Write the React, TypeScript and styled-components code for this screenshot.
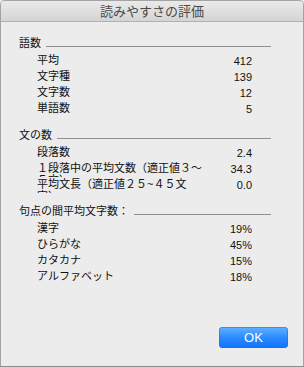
import React from "react";
import styled, { createGlobalStyle } from "styled-components";

const Global = createGlobalStyle`
  html, body { margin: 0; padding: 0; background: #ececec; }
  * { box-sizing: border-box; }
`;

const Window = styled.div`
  width: 304px;
  height: 367px;
  display: flex;
  flex-direction: column;
  background: #ececec;
  border: 1px solid #a3a3a3;
  border-bottom-color: #8a8a8a;
  border-radius: 5px 5px 0 0;
  overflow: hidden;
  font-family: "Liberation Sans", "Noto Sans CJK JP", sans-serif;
  color: #111;
`;

const TitleBar = styled.div`
  height: 22px;
  flex: none;
  display: flex;
  align-items: center;
  justify-content: center;
  background: linear-gradient(#ebebeb, #d4d4d4);
  border-bottom: 1px solid #b1b1b1;
  font-family: "Noto Sans CJK JP", sans-serif;
  font-size: 13px;
  line-height: 22px;
  color: #4a4a4a;
  padding-top: 1px;
  margin-top: -1px;
`;

const Body = styled.div`
  flex: 1;
  display: flex;
  flex-direction: column;
  padding: 15px 32px 0 18px;
  gap: 11px;
`;

const Section = styled.section`
  display: flex;
  flex-direction: column;
`;

const Header = styled.div`
  display: flex;
  align-items: flex-start;
  gap: 5px;
  height: 12px;
  margin-bottom: 5px;
  font-size: 11px;
  line-height: 12px;
`;

const HeaderLine = styled.div`
  flex: 1;
  margin-top: 9px;
  border-top: 1px solid #8e8e8e;
`;

const Row = styled.div`
  display: flex;
  align-items: flex-start;
  height: 16px;
  padding-left: 18px;
  padding-right: 19px;
  font-size: 11px;
`;

const Label = styled.div`
  width: 166px;
  height: 15px;
  line-height: 12px;
  overflow: hidden;
  text-spacing-trim: space-all;
`;

const Value = styled.div`
  flex: 1;
  text-align: right;
  line-height: 12px;
  padding-top: 1px;
`;

const Footer = styled.div`
  display: flex;
  justify-content: flex-end;
  padding: 0 15px 18px 0;
  margin-top: auto;
`;

const OkButton = styled.button`
  width: 69px;
  height: 21px;
  border: none;
  border-radius: 4px;
  background: linear-gradient(#62b2ff, #2b8bff 50%, #0f72fa);
  box-shadow: inset 0 0 0 0.5px #1b6fe0;
  color: #fff;
  font-family: "Liberation Sans", sans-serif;
  font-size: 13px;
  line-height: 21px;
  padding: 0;
`;

type Item = [string, string];

const sections: { title: string; items: Item[] }[] = [
  {
    title: "語数",
    items: [
      ["平均", "412"],
      ["文字種", "139"],
      ["文字数", "12"],
      ["単語数", "5"],
    ],
  },
  {
    title: "文の数",
    items: [
      ["段落数", "2.4"],
      ["１段落中の平均文数（適正値３〜５文）", "34.3"],
      ["平均文長（適正値２５~４５文字）", "0.0"],
    ],
  },
  {
    title: "句点の間平均文字数：",
    items: [
      ["漢字", "19%"],
      ["ひらがな", "45%"],
      ["カタカナ", "15%"],
      ["アルファベット", "18%"],
    ],
  },
];

export default function App() {
  return (
    <>
      <Global />
      <Window>
        <TitleBar>読みやすさの評価</TitleBar>
        <Body>
          {sections.map((s) => (
            <Section key={s.title}>
              <Header>
                <span>{s.title}</span>
                <HeaderLine />
              </Header>
              {s.items.map(([l, v]) => (
                <Row key={l}>
                  <Label>{l}</Label>
                  <Value>{v}</Value>
                </Row>
              ))}
            </Section>
          ))}
        </Body>
        <Footer>
          <OkButton>OK</OkButton>
        </Footer>
      </Window>
    </>
  );
}
